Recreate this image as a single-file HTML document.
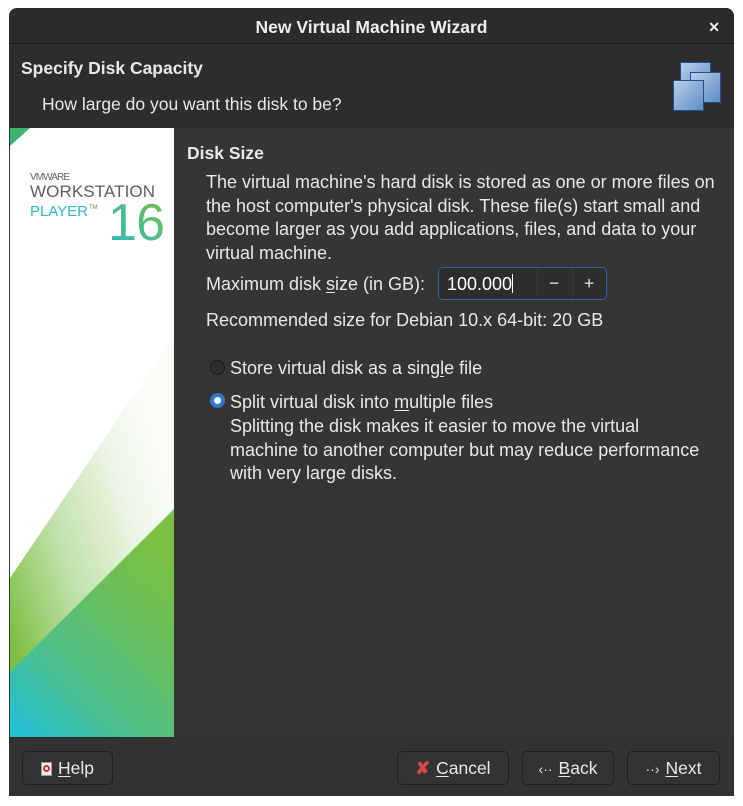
<!DOCTYPE html>
<html><head><meta charset="utf-8"><style>
*{margin:0;padding:0;box-sizing:border-box}
body{width:743px;height:806px;background:#fff;position:relative;overflow:hidden;font-family:"Liberation Sans",sans-serif;color:#e8e8e8}
.win{position:absolute;left:9px;top:8px;width:725px;height:788px;background:#353535;border-radius:8px 8px 0 0;overflow:hidden}
.title{position:absolute;left:0;top:0;width:725px;height:36px;background:#2b2b2b;border-bottom:1px solid #1c1c1c;text-align:center;line-height:38px;font-weight:bold;color:#eee;font-size:17.5px}
.close{position:absolute;right:14px;top:0;font-size:14px}
.hdr{position:absolute;left:0;top:36px;width:725px;height:84px;background:#2d2d2d}
.abs{position:absolute;white-space:nowrap}
.t{font-size:17.5px}
.b{font-size:18px}
.left{position:absolute;left:1px;top:120px;width:164px;height:609px;background:#fff}
.foot{position:absolute;left:0;top:729px;width:725px;height:59px;background:#323232;border-top:1px solid #2c2c2c}
.btn{position:absolute;top:13px;height:34px;border:1px solid #1f1f1f;border-radius:5px;background:#333;font-size:17.5px;line-height:32px;color:#e8e8e8;text-align:center}
u{text-decoration:underline;text-underline-offset:2px}
</style></head><body>
<div class="win">
 <div class="title">New Virtual Machine Wizard<span class="close">✕</span></div>
 <div class="hdr">
  <div class="abs t" style="left:12px;top:14px;font-weight:bold">Specify Disk Capacity</div>
  <div class="abs t" style="left:33px;top:50px">How large do you want this disk to be?</div>
  <svg class="abs" style="left:663px;top:16px" width="52" height="52" viewBox="0 0 52 52">
   <defs><linearGradient id="g" x1="0" y1="0" x2="1" y2="1"><stop offset="0" stop-color="#b9d0ea"/><stop offset="1" stop-color="#5b8cc4"/></linearGradient></defs>
   <rect x="8.5" y="2.5" width="30" height="30" fill="url(#g)" stroke="#244e8c"/>
   <rect x="18.5" y="12.5" width="30" height="30" fill="url(#g)" stroke="#244e8c"/>
   <rect x="1.5" y="20.5" width="30" height="30" fill="url(#g)" stroke="#244e8c"/>
  </svg>
 </div>
 <div class="left">
  <svg width="164" height="609" viewBox="0 0 164 609" style="position:absolute;left:0;top:0">
   <defs>
    <linearGradient id="band" x1="0" y1="0.75" x2="0.8" y2="0.1"><stop offset="0" stop-color="#7cc043"/><stop offset="0.35" stop-color="#bfe0a6"/><stop offset="0.75" stop-color="#eef6e8"/><stop offset="1" stop-color="#fbfdf9"/></linearGradient>
    <linearGradient id="main" x1="0" y1="1" x2="0.7" y2="0"><stop offset="0" stop-color="#1ec1dc"/><stop offset="0.35" stop-color="#4dbf8c"/><stop offset="0.75" stop-color="#6cbf55"/><stop offset="1" stop-color="#7cc043"/></linearGradient>
    <linearGradient id="n16" x1="0" y1="1" x2="1" y2="0"><stop offset="0" stop-color="#21b9c9"/><stop offset="1" stop-color="#7cc043"/></linearGradient>
   </defs>
   <polygon points="0,0 20,0 0,18" fill="#3cb371"/>
   <polygon points="0,450 164,208 164,609 0,609" fill="url(#band)"/>
   <polygon points="0,544 164,381 164,609 0,609" fill="url(#main)"/>
   <text x="20" y="52" font-family="Liberation Sans" font-size="10" fill="#666" textLength="40">VMWARE</text>
   <text x="20" y="69" font-family="Liberation Sans" font-size="17" fill="#5e5e5e" textLength="125">WORKSTATION</text>
   <text x="20" y="88" font-family="Liberation Sans" font-size="15" fill="#2fb8c8" textLength="58">PLAYER</text>
   <text x="79" y="81" font-family="Liberation Sans" font-size="6" fill="#5e8a5e">TM</text>
   <text x="98" y="112" font-family="Liberation Sans" font-size="52" fill="url(#n16)" textLength="57">16</text>
  </svg>
 </div>
 <div class="abs t" style="left:178px;top:135px;font-weight:bold">Disk Size</div>
 <div class="abs b" style="left:197px;top:163px;line-height:23.5px">The virtual machine's hard disk is stored as one or more files on<br>the host computer's physical disk. These file(s) start small and<br>become larger as you add applications, files, and data to your<br>virtual machine.</div>
 <div class="abs b" style="left:197px;top:266px">Maximum disk <u>s</u>ize (in GB):</div>
 <div class="abs" style="left:429px;top:259px;width:169px;height:33px;border:1px solid #2f64b0;border-radius:5px;background:#2d2d2d">
  <div class="abs b" style="left:8px;top:6px;color:#fff">100.000<span style="display:inline-block;width:1px;height:19px;background:#fff;vertical-align:-3px"></span></div>
  <div class="abs" style="left:98px;top:0;width:1px;height:31px;background:#3a3a3a"></div>
  <div class="abs" style="left:133px;top:0;width:1px;height:31px;background:#3a3a3a"></div>
  <div class="abs t" style="left:110px;top:5px">−</div>
  <div class="abs t" style="left:145px;top:5px">+</div>
 </div>
 <div class="abs b" style="left:197px;top:302px">Recommended size for Debian 10.x 64-bit: 20 GB</div>
 <div class="abs" style="left:201px;top:352px;width:15px;height:15px;border-radius:50%;border:1px solid #1a1a1a;background:#2e2e2e"></div>
 <div class="abs b" style="left:221px;top:350px">Store virtual disk as a sing<u>l</u>e file</div>
 <div class="abs" style="left:201px;top:385px;width:15px;height:15px;border-radius:50%;background:#2f78d0"><div style="position:absolute;left:4px;top:4px;width:7px;height:7px;border-radius:50%;background:#fff"></div></div>
 <div class="abs b" style="left:221px;top:384px">Split virtual disk into <u>m</u>ultiple files</div>
 <div class="abs b" style="left:221px;top:407px;line-height:23.5px">Splitting the disk makes it easier to move the virtual<br>machine to another computer but may reduce performance<br>with very large disks.</div>
 <div class="foot">
  <div class="btn" style="left:13px;width:91px"><span style="display:inline-block;width:11px;height:14px;background:#eee;border:1px solid #999;vertical-align:-2px;margin-right:6px;position:relative"><span style="position:absolute;left:1px;top:2px;width:7px;height:7px;border-radius:50%;border:2px solid #d03030"></span></span><u>H</u>elp</div>
  <div class="btn" style="left:388px;width:112px"><span style="color:#e04848;font-weight:bold;margin-right:6px">✘</span><u>C</u>ancel</div>
  <div class="btn" style="left:513px;width:92px"><span style="font-size:14px;margin-right:6px">‹··</span><u>B</u>ack</div>
  <div class="btn" style="left:618px;width:93px"><span style="font-size:14px;margin-right:6px">··›</span><u>N</u>ext</div>
 </div>
</div>
</body></html>
